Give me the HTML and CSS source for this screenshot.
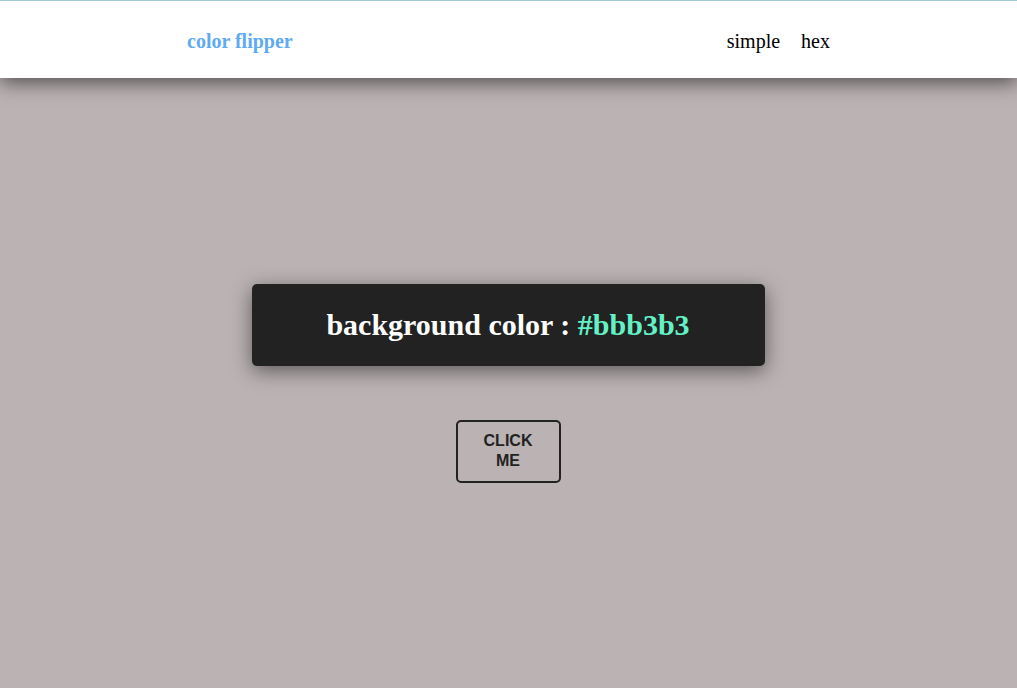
FILE: index.html
```html
<!DOCTYPE html>
<html lang="en">
<head>
<meta charset="utf-8">
<title>Color Flipper</title>
<link rel="stylesheet" href="styles.css">
</head>
<body>
<nav class="nav">
  <div class="nav-center">
    <h4 class="brand">color flipper</h4>
    <ul class="nav-links">
      <li><a href="#">simple</a></li>
      <li><a href="#">hex</a></li>
    </ul>
  </div>
</nav>
<main class="main">
  <div class="container">
    <h2 class="title">background color : <span class="color">#bbb3b3</span></h2>
    <button class="btn" type="button">click me</button>
  </div>
</main>
</body>
</html>
```
FILE: styles.css
```css
* { box-sizing: border-box; }
html, body { margin: 0; padding: 0; }
body {
  background: #bbb3b3;
  font-family: "Liberation Serif", "Times New Roman", serif;
  min-height: 100vh;
}
.nav {
  position: relative;
  z-index: 2;
  background: #fff;
  border-top: 1px solid #9fc9d1;
  height: 78px;
  box-shadow: 0 5px 18px rgba(0, 0, 0, 0.55);
  display: flex;
  align-items: center;
}
.nav-center {
  width: 643px;
  margin: 0 auto;
  display: flex;
  justify-content: space-between;
  align-items: center;
  padding-top: 3px;
}
.brand {
  margin: 0;
  font-size: 20px;
  font-weight: 700;
  color: #5eaaf4;
}
.nav-links {
  list-style: none;
  margin: 0;
  padding: 0 0 0 0;
  display: flex;
  gap: 21px;
}
.nav-links a {
  text-decoration: none;
  color: #000;
  font-size: 20px;
}
.main {
  min-height: calc(100vh - 78px);
  display: flex;
  align-items: center;
  justify-content: center;
}
.container {
  display: flex;
  flex-direction: column;
  align-items: center;
  gap: 54px;
  padding-right: 1px;
}
.title {
  margin: 0;
  width: 513px;
  height: 82px;
  background: #222;
  color: #fff;
  border-radius: 5px;
  font-size: 30px;
  font-weight: 700;
  display: flex;
  align-items: center;
  justify-content: center;
  box-shadow: 0 5px 20px rgba(0, 0, 0, 0.5);
}
.title .color {
  color: #63f2c6;
  margin-left: 0.25em;
}
.btn {
  width: 105px;
  height: 63px;
  padding: 0 24px;
  background: transparent;
  border: 2px solid #222;
  border-radius: 5px;
  color: #222;
  font-family: "Liberation Sans", Arial, sans-serif;
  font-weight: 700;
  font-size: 16px;
  line-height: 20px;
  text-transform: uppercase;
  cursor: pointer;
}
```
